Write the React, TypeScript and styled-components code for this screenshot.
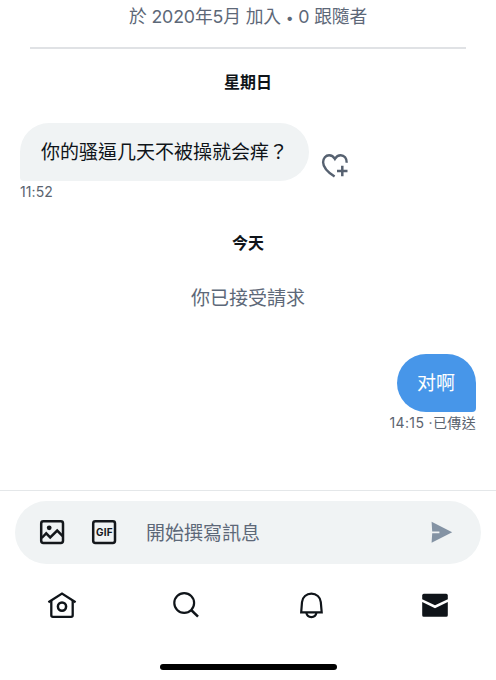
import React from 'react';
import styled, { createGlobalStyle } from 'styled-components';

const GlobalStyle = createGlobalStyle`
  * { box-sizing: border-box; }
  body { margin: 0; background: #fff; }
`;

const Screen = styled.main`
  width: 496px;
  height: 680px;
  display: flex;
  flex-direction: column;
  overflow: hidden;
  background: #fff;
  color: #0f1419;
  font-family: Inter, 'Noto Sans CJK TC', sans-serif;
`;

const Conversation = styled.section`
  height: 490px;
  display: flex;
  flex-direction: column;
  padding: 0 20px;
`;

const ProfileSummary = styled.header`
  height: 49px;
  margin: 0 10px;
  border-bottom: 2px solid #e0e2e5;
  text-align: center;
  font-size: 17.8px;
  letter-spacing: -0.16px;
  line-height: 33px;
  color: #5d6878;
  white-space: nowrap;
`;

const Dot = styled.span`
  font-size: 14px;
`;

const DayLabel = styled.h2<{ $top: number }>`
  margin: ${({ $top }) => $top}px 0 0;
  height: 24px;
  line-height: 24px;
  font-size: 16px;
  font-weight: 700;
  text-align: center;
`;

const Notice = styled.p`
  margin: 30px 0 0;
  height: 28px;
  line-height: 28px;
  font-size: 19px;
  text-align: center;
  color: #5d6878;
`;

const MessageRow = styled.div<{ $sent?: boolean; $top: number }>`
  display: flex;
  align-items: center;
  justify-content: ${({ $sent }) => ($sent ? 'flex-end' : 'flex-start')};
  gap: 12px;
  margin-top: ${({ $top }) => $top}px;
`;

const Bubble = styled.div<{ $sent?: boolean }>`
  height: 58px;
  width: ${({ $sent }) => ($sent ? 79 : 289)}px;
  padding-left: ${({ $sent }) => ($sent ? 20 : 21)}px;
  line-height: 59px;
  font-size: 19px;
  white-space: nowrap;
  color: ${({ $sent }) => ($sent ? '#fff' : '#0f1419')};
  background: ${({ $sent }) => ($sent ? '#4796e9' : '#f0f3f4')};
  border-radius: ${({ $sent }) => ($sent ? '29px 29px 4px 29px' : '29px 29px 29px 4px')};
`;

const ReactButton = styled.button`
  padding: 0;
  margin-top: 28px;
  border: 0;
  background: none;
  width: 28px;
  height: 28px;
  svg { display: block; }
`;

const Stamp = styled.div<{ $sent?: boolean }>`
  height: 22px;
  line-height: 22px;
  font-size: 14px;
  letter-spacing: ${({ $sent }) => ($sent ? 0.35 : 0.1)}px;
  color: #5b6470;
  text-align: ${({ $sent }) => ($sent ? 'right' : 'left')};
  white-space: pre;
`;

const ComposerArea = styled.section`
  height: 74px;
  padding: 10px 15px 0;
  border-top: 1px solid #e4e7e9;
`;

const Composer = styled.div`
  height: 63px;
  border-radius: 32px;
  background: #f0f3f4;
  display: flex;
  align-items: center;
  padding: 0 27px 1px 22.5px;
  svg { display: block; flex: none; }
`;

const Tools = styled.div`
  display: flex;
  gap: 24px;
`;

const Placeholder = styled.span`
  flex: 1;
  margin: 4px 0 0 28.5px;
  font-size: 19px;
  line-height: 28px;
  color: #5d6878;
`;

const GifLabel = styled.text`
  font-family: Inter, sans-serif;
  font-size: 10px;
  font-weight: 700;
`;

const Nav = styled.nav`
  height: 82px;
  padding-left: 1px;
  display: grid;
  grid-template-columns: repeat(4, 124.3px);
  justify-content: center;
  justify-items: center;
  align-items: center;
  svg { display: block; }
`;

const HomeIndicator = styled.div`
  width: 177px;
  height: 6px;
  margin: 18px auto 0;
  border-radius: 3px;
  background: #000;
`;

const HeartPlusIcon = () => (
  <svg width="28" height="28" viewBox="0 0 28 28" fill="none" stroke="#566170" strokeWidth="2.4">
    <path d="M13.6 24.6C7.2 20.4 2.1 15.4 2.1 10.2C2.1 6.2 4.8 3.2 8.1 3.2C10.9 3.2 12.7 4.8 13.9 6.9C15.1 4.8 16.9 3.2 19.7 3.2C23.2 3.2 25.9 6.3 25.7 10.8" />
    <path d="M21.3 13.8V24.2M16 19H26.5" strokeWidth="2.5" />
  </svg>
);

const ImageIcon = () => (
  <svg width="28" height="28" viewBox="0 0 28 28" fill="none" stroke="#14171b" strokeWidth="2.5">
    <rect x="3.2" y="3.2" width="21.8" height="21.8" rx="2.2" />
    <circle cx="11.2" cy="9.8" r="2.4" fill="#14171b" stroke="none" />
    <path d="M3.7 20L8.2 15.4L12.2 19.4L19.2 12.6L24.7 18.2" />
  </svg>
);

const GifIcon = () => (
  <svg width="28" height="28" viewBox="0 0 28 28">
    <rect x="3.2" y="3.2" width="21.8" height="21.8" rx="2.2" fill="none" stroke="#14171b" strokeWidth="2.5" />
    <GifLabel x="6" y="17.7" fill="#14171b" textLength="16.6">GIF</GifLabel>
  </svg>
);

const SendIcon = () => (
  <svg width="24" height="24" viewBox="0 0 24 24">
    <path d="M1.6 1.8L22.2 12.2L1.6 22.8L2.2 13.3H9.4V11.5H2.2Z" fill="#8493a4" />
  </svg>
);

const HomeIcon = () => (
  <svg width="30" height="30" viewBox="0 0 30 30" fill="none" stroke="#0f1419" strokeWidth="2.3">
    <path d="M1.4 12.2L15 3.6L28.6 12.2" />
    <path d="M4.3 10.5V25.2Q4.3 26.8 5.9 26.8H24.1Q25.7 26.8 25.7 25.2V10.5" />
    <circle cx="15" cy="16.6" r="4.1" strokeWidth="2.5" />
  </svg>
);

const SearchIcon = () => (
  <svg width="30" height="30" viewBox="0 0 30 30" fill="none" stroke="#0f1419" strokeWidth="2.2">
    <circle cx="13.2" cy="13" r="9.9" />
    <path d="M20.2 20L27 26.6" strokeWidth="2.5" />
  </svg>
);

const BellIcon = () => (
  <svg width="30" height="30" viewBox="0 0 30 30" fill="none" stroke="#0f1419" strokeWidth="2.2">
    <path d="M5.2 22.4L6 12.1C6.4 7.1 10.4 3.7 15.4 3.7S24.4 7.1 24.8 12.1L25.7 22.4Z" />
    <path d="M10.3 22.4C10.7 25.2 12.6 27.1 15.4 27.1S20.1 25.2 20.5 22.4" />
  </svg>
);

const MailIcon = () => (
  <svg width="30" height="30" viewBox="0 0 30 30" fill="#0f1419">
    <path d="M2.2 9.2V5.4Q2.2 3.8 3.8 3.8H26.2Q27.8 3.8 27.8 5.4V9.2L15 15.2Z" />
    <path d="M2.2 12L15 18.2L27.8 12V25.2Q27.8 26.8 26.2 26.8H3.8Q2.2 26.8 2.2 25.2Z" />
  </svg>
);

export default function App() {
  return (
    <Screen lang="zh-Hant">
      <GlobalStyle />
      <Conversation>
        <ProfileSummary>於 2020年5月 加入 <Dot>•</Dot> 0 跟隨者</ProfileSummary>
        <DayLabel $top={21}>星期日</DayLabel>
        <MessageRow $top={29}>
          <Bubble>你的骚逼几天不被操就会痒？</Bubble>
          <ReactButton aria-label="加入心情"><HeartPlusIcon /></ReactButton>
        </MessageRow>
        <Stamp>11:52</Stamp>
        <DayLabel $top={28}>今天</DayLabel>
        <Notice>你已接受請求</Notice>
        <MessageRow $sent $top={41}>
          <Bubble $sent>对啊</Bubble>
        </MessageRow>
        <Stamp $sent>14:15 ·已傳送</Stamp>
      </Conversation>
      <ComposerArea>
        <Composer>
          <Tools><ImageIcon /><GifIcon /></Tools>
          <Placeholder>開始撰寫訊息</Placeholder>
          <SendIcon />
        </Composer>
      </ComposerArea>
      <Nav>
        <HomeIcon />
        <SearchIcon />
        <BellIcon />
        <MailIcon />
      </Nav>
      <HomeIndicator />
    </Screen>
  );
}
